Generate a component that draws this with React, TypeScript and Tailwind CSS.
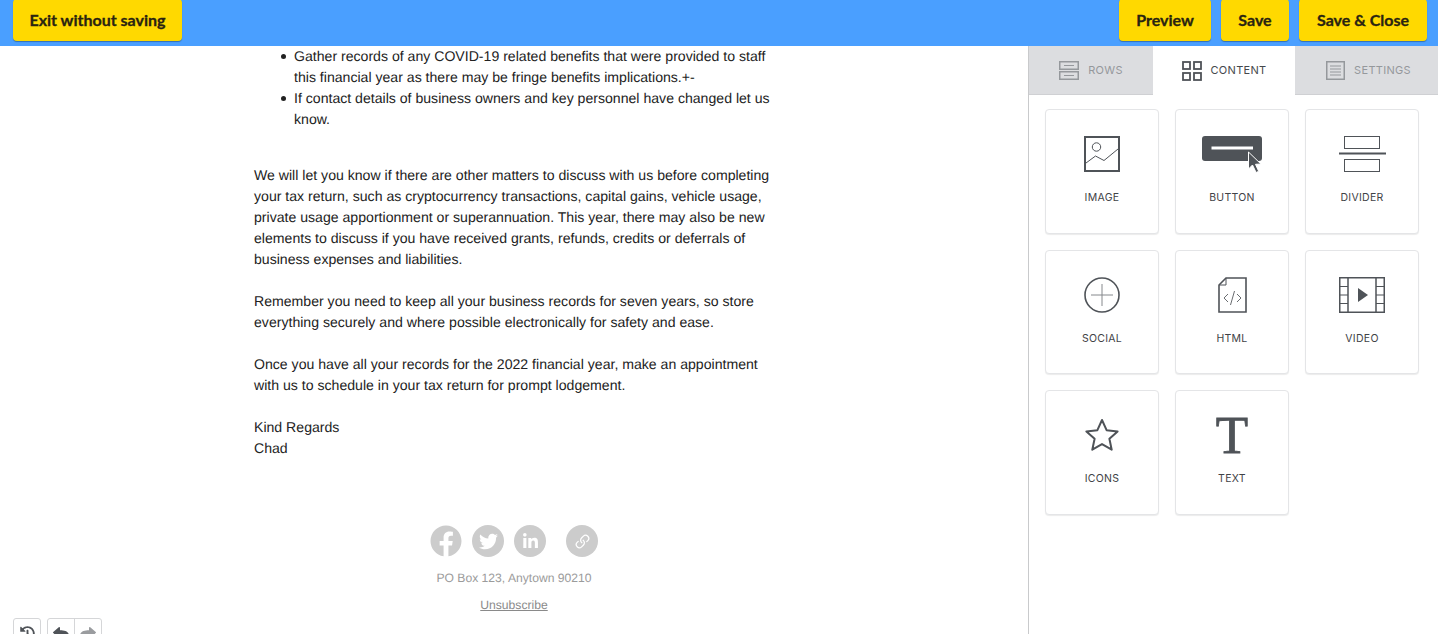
import type { ReactNode } from "react";
import { Link } from "lucide-react";
import { FaFacebook, FaHistory, FaLinkedinIn, FaReply, FaShare, FaTwitter } from "react-icons/fa";

const INK = "#4f5358";

function TopButton({ label, className }: { label: string; className: string }) {
  return (
    <button
      className={`flex h-[42px] items-center justify-center rounded-[4px] bg-[#ffd900] text-[16px] font-bold text-[#2a2411] shadow-[0_1px_1px_rgba(0,0,0,0.3)] [-webkit-text-stroke:0.3px_#2a2411] ${className}`}
    >
      {label}
    </button>
  );
}

function RowsIcon() {
  return (
    <svg width="20" height="19" viewBox="0 0 20 19" fill="none" stroke="#95989c" strokeWidth="1.5">
      <rect x="0.75" y="0.75" width="18.5" height="7.5" />
      <rect x="0.75" y="10.75" width="18.5" height="7.5" />
      <path d="M5 4.5h10M5 14.5h10" strokeWidth="1" />
    </svg>
  );
}

function ContentIcon() {
  return (
    <svg width="20" height="20" viewBox="0 0 20 20" fill="none" stroke={INK} strokeWidth="1.8">
      <rect x="1" y="1" width="7" height="7" />
      <rect x="12" y="1" width="7" height="7" />
      <rect x="1" y="12" width="7" height="7" />
      <rect x="12" y="12" width="7" height="7" />
    </svg>
  );
}

function SettingsIcon() {
  return (
    <svg width="19" height="19" viewBox="0 0 19 19" fill="none" stroke="#95989c" strokeWidth="1.5">
      <rect x="0.75" y="0.75" width="17.5" height="17.5" />
      <path d="M4 5h11M4 8h11M4 11h11M4 14h11" strokeWidth="1" />
    </svg>
  );
}

function ImageIcon() {
  return (
    <svg width="36" height="36" viewBox="0 0 36 36" fill="none" stroke={INK}>
      <rect x="1" y="1" width="34" height="34" strokeWidth="2" />
      <circle cx="12.5" cy="11" r="4.2" strokeWidth="1" />
      <path d="M2 27l9.5-7 8.5 4.5L34 13" strokeWidth="1" />
    </svg>
  );
}

function ButtonIcon() {
  return (
    <svg width="60" height="37" viewBox="0 0 60 37" fill="none">
      <rect x="0" y="0" width="60" height="25" rx="3" fill={INK} />
      <rect x="9.5" y="10.5" width="41.5" height="3" fill="#fff" />
      <path d="M46.5 16v17l4-4 3.6 7.5 2.6-1.2-3.2-7 5.4-.3z" fill={INK} stroke="#fff" strokeWidth="1" />
    </svg>
  );
}

function DividerIcon() {
  return (
    <svg width="47" height="36" viewBox="0 0 47 36" fill="none" stroke={INK}>
      <rect x="5.5" y="0.5" width="35" height="12" />
      <path d="M0 17.5h47" strokeWidth="2" />
      <rect x="5.5" y="23.5" width="35" height="12" />
    </svg>
  );
}

function SocialIcon() {
  return (
    <svg width="36" height="36" viewBox="0 0 36 36" fill="none" stroke={INK}>
      <circle cx="18" cy="18" r="17" strokeWidth="1.6" />
      <path d="M18 7v22M7 18h22" stroke="#85888c" strokeWidth="1" />
    </svg>
  );
}

function HtmlIcon() {
  return (
    <svg width="29" height="36" viewBox="0 0 29 36" fill="none" stroke={INK}>
      <path d="M8 1h20v34H1V8z" strokeWidth="1.6" />
      <path d="M8 1v7H1" strokeWidth="1" />
      <path d="M10 17l-4 4 4 4M19 17l4 4-4 4M16.5 14l-4 14" stroke="#6a6d71" strokeWidth="1" />
    </svg>
  );
}

function VideoIcon() {
  return (
    <svg width="46" height="36" viewBox="0 0 46 36" fill="none" stroke={INK}>
      <rect x="0.75" y="0.75" width="44.5" height="34.5" strokeWidth="1.5" />
      <path d="M9 1v34M37 1v34" strokeWidth="1.5" />
      <path d="M1 9.5h8M1 18h8M1 26.5h8M37 9.5h8M37 18h8M37 26.5h8" strokeWidth="1.2" />
      <path d="M19 11l10 7-10 7z" fill={INK} stroke="none" />
    </svg>
  );
}

function StarIcon() {
  return (
    <svg width="34" height="34" viewBox="0 0 34 34" fill="none" stroke={INK} strokeWidth="2" strokeLinejoin="round" className="mt-px">
      <path d="M17 2l4.6 10.2 11 1.2-8.2 7.4 2.3 10.9L17 26.1l-9.7 5.6 2.3-10.9-8.2-7.4 11-1.2z" />
    </svg>
  );
}

function TextIcon() {
  return (
    <span className="block font-['Liberation_Serif',serif] text-[53px] leading-[36px] text-[#4f5358] [-webkit-text-stroke:0.8px_#4f5358]">
      T
    </span>
  );
}

function Card({ label, children }: { label: string; children: ReactNode }) {
  return (
    <div className="flex h-[124.5px] w-[114px] flex-col items-center rounded-[4px] border border-[#e4e5e7] bg-white pt-[26px] shadow-[0_1px_1px_rgba(0,0,0,0.08)]">
      <div className="flex h-[37px] w-full items-start justify-center">{children}</div>
      <div className="mt-[17px] font-['Inter',sans-serif] text-[10.5px] leading-[16px] tracking-[0.3px] text-[#3f4246]">{label}</div>
    </div>
  );
}

function Tab({ label, icon, active, className }: { label: string; icon: ReactNode; active?: boolean; className: string }) {
  return (
    <div
      className={`flex h-[49px] items-center justify-center gap-[9px] font-['Inter',sans-serif] text-[11px] tracking-[0.3px] ${
        active ? "bg-white text-[#45484c]" : "bg-[#dcdde0] text-[#95989c]"
      } ${className}`}
    >
      {icon}
      <span className="-mt-px">{label}</span>
    </div>
  );
}

function SocialDot({ children }: { children: ReactNode }) {
  return (
    <span className="flex h-8 w-8 items-center justify-center rounded-full bg-[#cccccc] text-white">{children}</span>
  );
}

const BULLET = "relative before:absolute before:left-[-13px] before:top-[8px] before:h-[5px] before:w-[5px] before:rounded-full before:bg-[#222222] before:content-['']";

export default function App() {
  return (
    <div className="flex h-[634px] w-[1438px] flex-col overflow-hidden bg-white font-['Liberation_Sans',Arial,sans-serif]">
      <header className="flex h-[46px] shrink-0 items-start justify-between bg-[#4a9fff] pl-[13px] pr-[11px] font-['Lato',sans-serif]">
        <TopButton label="Exit without saving" className="-mt-px w-[169px]" />
        <div className="-mt-px flex gap-[10px]">
          <TopButton label="Preview" className="w-[92px]" />
          <TopButton label="Save" className="w-[68px]" />
          <TopButton label="Save & Close" className="w-[128px]" />
        </div>
      </header>

      <div className="flex min-h-0 flex-1">
        <main className="relative w-[1029px] shrink-0 border-r border-[#c9cacc]">
          <div className="ml-[254px] w-[520px] text-[14.1px] leading-[21px] text-[#222222] [text-rendering:geometricPrecision]">
            <ul className="list-none pl-10">
              <li className={BULLET}>Gather records of any COVID-19 related benefits that were provided to staff this financial year as there may be fringe benefits implications.+-</li>
              <li className={BULLET}>If contact details of business owners and key personnel have changed let us know.</li>
            </ul>
            <p className="mt-[35px]">
              We will let you know if there are other matters to discuss with us before completing your tax return, such as cryptocurrency transactions, capital gains, vehicle usage, private usage apportionment or superannuation. This year, there may also be new elements to discuss if you have received grants, refunds, credits or deferrals of business expenses and liabilities.
            </p>
            <p className="mt-[21px]">
              Remember you need to keep all your business records for seven years, so store everything securely and where possible electronically for safety and ease.
            </p>
            <p className="mt-[21px]">
              Once you have all your records for the 2022 financial year, make an appointment with us to schedule in your tax return for prompt lodgement.
            </p>
            <p className="mt-[21px]">
              Kind Regards
              <br />
              Chad
            </p>
            <div className="mt-[66px] flex items-center justify-center">
              <span className="text-[32px] leading-none text-[#cccccc]"><FaFacebook /></span>
              <div className="ml-[10px]"><SocialDot><FaTwitter size={19} /></SocialDot></div>
              <div className="ml-[10px]"><SocialDot><FaLinkedinIn size={17} /></SocialDot></div>
              <div className="ml-[20px]"><SocialDot><Link size={15} strokeWidth={2} className="-scale-x-100 rotate-90" /></SocialDot></div>
            </div>
            <div className="mt-[13px] text-center text-[12.15px] leading-[16px] text-[#9b9b9b]">PO Box 123, Anytown 90210</div>
            <div className="mt-[11px] text-center text-[12.15px] leading-[16px] text-[#8a8a8a] underline">Unsubscribe</div>
          </div>

          <div className="absolute left-[13px] top-[572px] flex gap-[6px] text-[#4f5358]">
            <button className="flex h-[30px] w-[28px] justify-center rounded-[3px] border border-[#d5d6d8] bg-white pt-[7px]">
              <FaHistory size={15} />
            </button>
            <div className="flex h-[30px] w-[55px] rounded-[3px] border border-[#d5d6d8] bg-white">
              <span className="flex w-[27px] justify-center border-r border-[#d5d6d8] pt-[7px]"><FaReply size={16} /></span>
              <span className="flex flex-1 justify-center pt-[7px] text-[#9a9c9f]"><FaShare size={16} /></span>
            </div>
          </div>
        </main>

        <aside className="flex-1 bg-white">
          <div className="flex">
            <Tab label="ROWS" icon={<RowsIcon />} className="w-[124px] shadow-[inset_0_-1px_0_#cfd0d3]" />
            <Tab label="CONTENT" icon={<ContentIcon />} active className="w-[142px]" />
            <Tab label="SETTINGS" icon={<SettingsIcon />} className="flex-1 pl-1 shadow-[inset_0_-1px_0_#cfd0d3]" />
          </div>
          <div className="grid grid-cols-[114px_114px_114px] gap-x-4 gap-y-4 pl-4 pt-[14px]">
            <Card label="IMAGE"><ImageIcon /></Card>
            <Card label="BUTTON"><ButtonIcon /></Card>
            <Card label="DIVIDER"><DividerIcon /></Card>
            <Card label="SOCIAL"><SocialIcon /></Card>
            <Card label="HTML"><HtmlIcon /></Card>
            <Card label="VIDEO"><VideoIcon /></Card>
            <Card label="ICONS"><StarIcon /></Card>
            <Card label="TEXT"><TextIcon /></Card>
          </div>
        </aside>
      </div>
    </div>
  );
}
